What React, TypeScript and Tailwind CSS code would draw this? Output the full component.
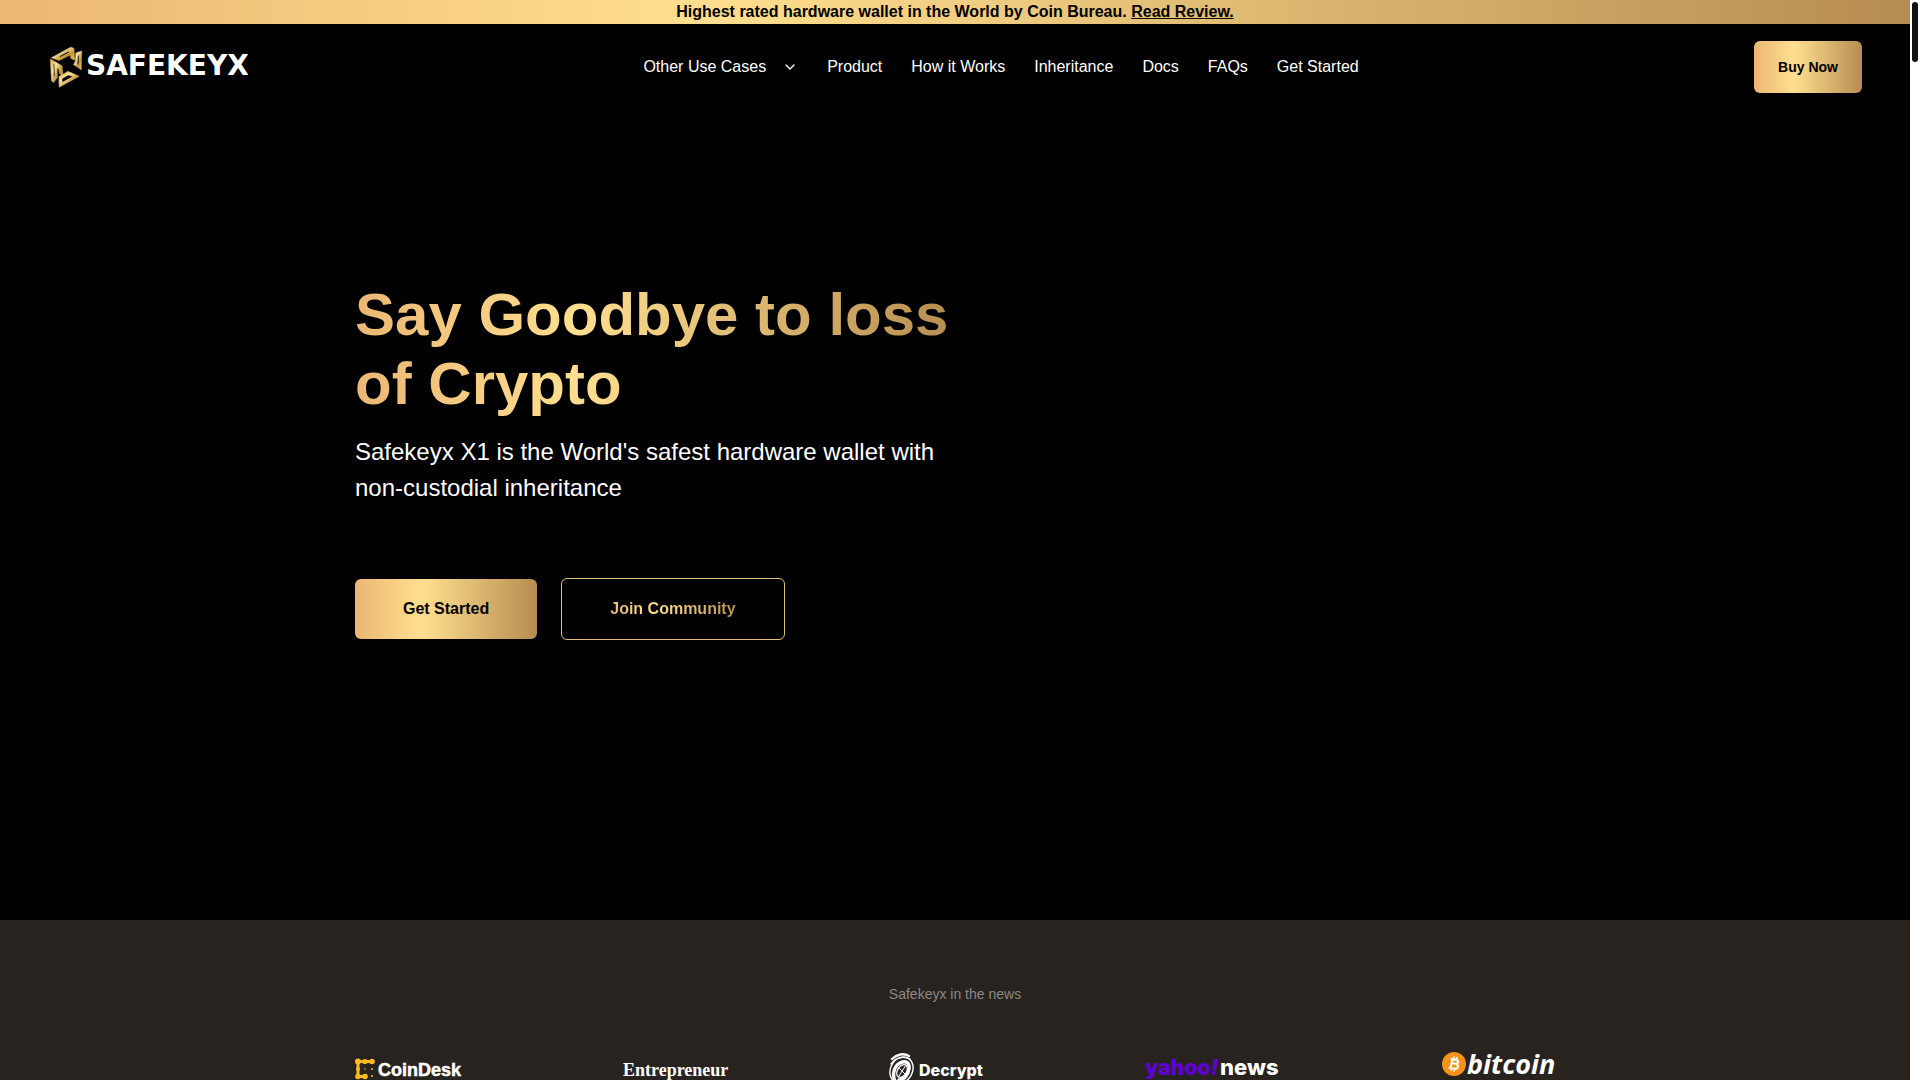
import { ReactNode } from "react";
import { clsx } from "clsx";
import { ChevronDown } from "lucide-react";

const gold = "bg-[linear-gradient(90deg,#ebb774_0%,#ffdf8f_37%,#b68d50_100%)]";

const navLinks = ["Product", "How it Works", "Inheritance", "Docs", "FAQs", "Get Started"];

const SafekeyxLogo = () => (
  <svg width="200" height="44" viewBox="0 0 200 44" role="img" aria-label="Safekeyx">
    <defs>
      <linearGradient id="emblem" x1="0" y1="0" x2="1" y2="1">
        <stop offset="0" stopColor="#d9a83f" />
        <stop offset="0.35" stopColor="#f7e3a0" />
        <stop offset="0.65" stopColor="#c4963a" />
        <stop offset="1" stopColor="#e3bd5c" />
      </linearGradient>
    </defs>
    <g fill="url(#emblem)" stroke="url(#emblem)" strokeWidth="0.6" fillRule="evenodd">
      <path d="M3.5 12.7 L22.8 2.2 L26 3.4 L26.6 15 L23 13.4 L22.2 10 L11 15.6 Z M11 11.3 L20.6 6.2 L21 7.8 L12.4 12.2 Z" />
      <path d="M2.4 14 L14.2 21 L14.8 30.5 L11.4 28.4 L10.8 24 L9 23 L9.4 32.4 L5.6 37.6 L3.6 36 Z M5.2 18.6 L6.6 19.4 L7 30.6 L5.8 32.4 Z" />
      <path d="M33.8 6 L33.2 24.8 L25.6 19.6 L27.6 16 L27.8 8 Z M29.8 10.4 L31.2 9.8 L30.8 20 L29.2 19 Z" />
      <path d="M11 31.4 L20 26.4 L31.2 31.2 L11.2 42.2 Z M14 33.4 L20.4 30 L25 31.6 L14 37.4 Z" />
    </g>
    <text x="38" y="30" fill="#fff" fontFamily="DejaVu Sans, sans-serif" fontWeight="700" fontSize="28">
      SAFEKEYX
    </text>
  </svg>
);

const CoinDeskLogo = () => (
  <svg width="107" height="28" viewBox="0 0 107 28" role="img" aria-label="CoinDesk">
    <g fill="#fdbb21">
      <path d="M17 6.5 H3 V21.5 H10" fill="none" stroke="#fdbb21" strokeWidth="3" />
      <circle cx="3" cy="6.5" r="3" />
      <circle cx="10" cy="6.5" r="2.6" />
      <circle cx="17" cy="6.5" r="2.8" />
      <circle cx="3" cy="14" r="2" />
      <circle cx="3" cy="21.5" r="2.8" />
      <circle cx="10" cy="21.5" r="2.8" />
      <circle cx="10" cy="14" r="0.8" />
      <circle cx="17" cy="14" r="1" />
      <circle cx="17" cy="21" r="1" />
    </g>
    <text
      x="23"
      y="21"
      fill="#fff"
      stroke="#fff"
      strokeWidth="0.5"
      fontFamily="Liberation Sans, sans-serif"
      fontWeight="700"
      fontSize="18"
    >
      CoinDesk
    </text>
  </svg>
);

const EntrepreneurLogo = () => (
  <svg width="104" height="28" viewBox="0 0 104 28" overflow="visible" role="img" aria-label="Entrepreneur">
    <text x="0" y="21" fill="#fff" fontFamily="Liberation Serif, serif" fontWeight="700" fontSize="18">
      Entrepreneur
    </text>
  </svg>
);

const DecryptLogo = () => (
  <svg width="97" height="32" viewBox="0 0 97 32" role="img" aria-label="Decrypt">
    <g fill="none" stroke="#fff" strokeLinecap="round">
      <path d="M4 6 C9 1 16 0 21 3" strokeWidth="2.4" />
      <path d="M3 11 C8 4 16 3 22 6" strokeWidth="1.4" />
      <ellipse cx="13.5" cy="17" rx="11" ry="13.5" strokeWidth="1.4" transform="rotate(28 13.5 17)" />
      <path d="M7 28 C4 22 6 13 12 10 C18 7 22 10 21 16 C20 22 16 27 11 27" strokeWidth="3.4" />
      <ellipse cx="14" cy="18" rx="4.5" ry="7" strokeWidth="1.2" transform="rotate(32 14 18)" />
      <path d="M11 23 L18 12 M11 15 L17 21" strokeWidth="1" />
    </g>
    <text x="31" y="23" fill="#fff" fontFamily="Inter, sans-serif" fontWeight="800" fontSize="16">
      Decrypt
    </text>
  </svg>
);

const YahooLogo = () => (
  <svg width="136" height="28" viewBox="0 0 136 28" overflow="visible" role="img" aria-label="yahoo! news">
    <text x="0" y="20" fill="#6001d2" fontFamily="Inter, sans-serif" fontWeight="900" fontSize="21">
      yahoo<tspan fontStyle="italic">!</tspan>
    </text>
    <text x="75" y="20" fill="#fff" fontFamily="Inter, sans-serif" fontWeight="800" fontSize="22">
      news
    </text>
  </svg>
);

const BitcoinLogo = () => (
  <svg width="113" height="38" viewBox="0 0 113 38" overflow="visible" role="img" aria-label="bitcoin">
    <circle cx="12" cy="14" r="12" fill="#f7931a" />
    <g fill="none" stroke="#fff" strokeWidth="2" transform="rotate(12 12 14)">
      <path d="M7.5 9.5 H13 C16.5 9.5 16.5 13.5 13 13.5 H9.5 M13 13.5 C17.5 13.5 17.5 18.5 13 18.5 H7.5 M9.5 9.5 V18.5" />
      <path d="M10.5 6.5 V9.5 M13.5 6.5 V9.5 M10.5 18.5 V21.5 M13.5 18.5 V21.5" strokeWidth="1.5" />
    </g>
    <text x="25" y="24" fill="#fff" fontFamily="Open Sans, sans-serif" fontWeight="700" fontStyle="italic" fontSize="27">
      bitcoin
    </text>
  </svg>
);

const GoldText = ({ children }: { children: ReactNode }) => (
  <span className={clsx(gold, "bg-clip-text text-transparent")}>{children}</span>
);

const Header = () => (
  <header className="flex items-center justify-between px-12 py-[17px]">
    <a href="#home">
      <SafekeyxLogo />
    </a>
    <nav className="flex items-center gap-[29px] text-base">
      <button type="button" className="flex items-center gap-4">
        Other Use Cases
        <ChevronDown className="h-4 w-4" />
      </button>
      {navLinks.map((link) => (
        <a key={link} href="#home">
          {link}
        </a>
      ))}
    </nav>
    <button type="button" className={clsx(gold, "h-[52px] rounded-md px-6 text-sm font-bold text-black")}>
      Buy Now
    </button>
  </header>
);

const Hero = () => (
  <section className="mx-auto grid w-full max-w-[1200px] grid-cols-2 pt-[170px] pb-[280px]">
    <div>
      <h1 className={clsx(gold, "bg-clip-text text-[60px] leading-[69px] font-bold text-transparent")}>
        Say Goodbye to loss of Crypto
      </h1>
      <p className="mt-4 text-2xl leading-9">
        Safekeyx X1 is the World's safest hardware wallet with non-custodial inheritance
      </p>
      <div className="mt-[72px] flex items-center gap-6">
        <button type="button" className={clsx(gold, "h-[60px] rounded-md px-12 font-bold text-black")}>
          Get Started
        </button>
        <button type="button" className="h-[62px] rounded-md border border-[#e3bf72] px-12 font-bold">
          <GoldText>Join Community</GoldText>
        </button>
      </div>
    </div>
  </section>
);

const News = () => (
  <section className="bg-[#28231f] pt-16 pb-16">
    <h2 className="text-center text-sm leading-5 text-[#8b8885]">Safekeyx in the news</h2>
    <div className="mx-auto mt-[46px] flex w-full max-w-[1200px] items-center justify-between">
      <CoinDeskLogo />
      <EntrepreneurLogo />
      <DecryptLogo />
      <YahooLogo />
      <BitcoinLogo />
    </div>
  </section>
);

const App = () => {
  return (
    <div className="flex h-screen bg-black font-['Liberation_Sans',Arial,sans-serif] text-white">
      <div className="min-w-0 flex-1 overflow-y-auto [scrollbar-width:none]">
        <p className={clsx(gold, "text-center text-base font-bold text-black")}>
          Highest rated hardware wallet in the World by Coin Bureau.{" "}
          <a href="#review" className="underline">
            Read Review.
          </a>
        </p>
        <Header />
        <Hero />
        <News />
      </div>
      <div className="w-[10px] bg-white p-[2px]">
        <div className="h-[60px] rounded-full bg-[#101114]" />
      </div>
    </div>
  );
};

export default App;
